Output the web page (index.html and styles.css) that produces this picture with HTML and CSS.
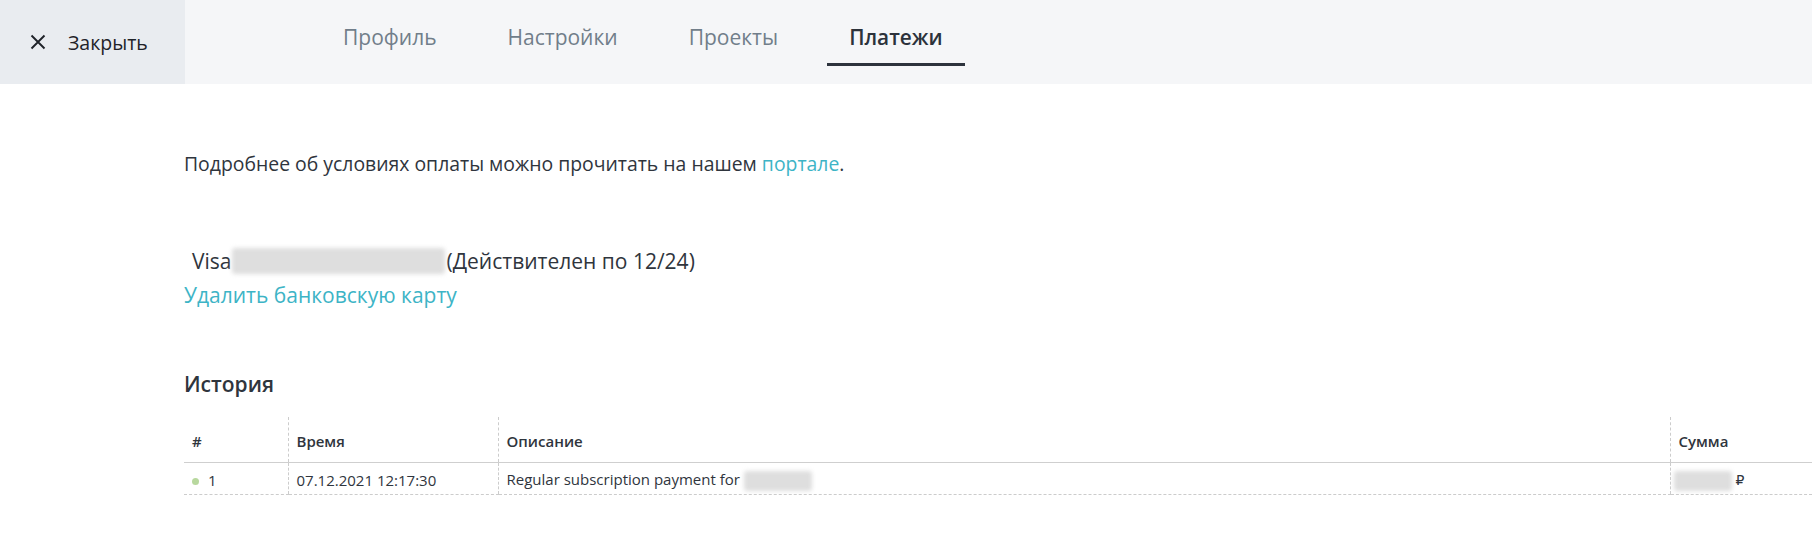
FILE: index.html
```html
<!DOCTYPE html>
<html lang="ru">
<head>
<meta charset="utf-8">
<title>Платежи</title>
<link rel="stylesheet" href="styles.css">
</head>
<body>
<header class="topbar">
  <a class="close" href="#">
    <svg class="close-icon" width="16" height="16" viewBox="0 0 16 16"><path d="M1.5 1.5 L14.5 14.5 M14.5 1.5 L1.5 14.5" stroke="#1f2329" stroke-width="1.9" fill="none"/></svg>
    <span>Закрыть</span>
  </a>
  <nav class="tabs">
    <a class="tab" href="#">Профиль</a>
    <a class="tab" href="#">Настройки</a>
    <a class="tab" href="#">Проекты</a>
    <a class="tab active" href="#">Платежи</a>
  </nav>
</header>
<main class="content">
  <p class="intro">Подробнее об условиях оплаты можно прочитать на нашем <a class="link" href="#">портале</a>.</p>
  <div class="card-line"><span>Visa</span><span class="blur blur-card"></span><span>(Действителен по 12/24)</span></div>
  <a class="link delete" href="#">Удалить банковскую карту</a>
  <h2 class="history-title">История</h2>
  <table class="history">
    <colgroup>
      <col class="c-num"><col class="c-time"><col class="c-desc"><col class="c-sum">
    </colgroup>
    <thead>
      <tr><th>#</th><th>Время</th><th>Описание</th><th>Сумма</th></tr>
    </thead>
    <tbody>
      <tr>
        <td><span class="dot"></span>1</td>
        <td>07.12.2021 12:17:30</td>
        <td>Regular subscription payment for <span class="blur blur-desc"></span></td>
        <td><span class="blur blur-sum"></span><span class="rub">₽</span></td>
      </tr>
    </tbody>
  </table>
</main>
</body>
</html>
```
FILE: styles.css
```css
* { box-sizing: border-box; }
html, body { margin: 0; padding: 0; background: #fff; }
body {
  font-family: "Open Sans", "Noto Sans", sans-serif;
  color: #2f353d;
  overflow: hidden;
}
a { text-decoration: none; }

.topbar {
  display: flex;
  height: 84px;
  background: #f5f6f8;
}
.close {
  width: 185px;
  display: flex;
  align-items: center;
  gap: 22px;
  padding-left: 30px;
  background: #e9ecf0;
  color: #1f2329;
  font-size: 19.5px;
}
.close-icon { display: block; }

.tabs {
  display: flex;
  gap: 27px;
  margin-left: 136px;
}
.tab {
  display: flex;
  align-items: center;
  height: 66px;
  padding: 11px 22px 0;
  border-bottom: 3px solid transparent;
  font-size: 21px;
  color: #717e8a;
}
.tab.active {
  color: #2c323b;
  font-weight: 600;
  font-size: 20.8px;
  border-bottom-color: #2d333d;
}

.content {
  padding: 65px 0 0 184px;
}
.intro {
  margin: 0;
  font-size: 19.4px;
  line-height: 30px;
}
.link { color: #3db4c6; }
.card-line {
  margin-top: 67px;
  padding-left: 8px;
  font-size: 21px;
  line-height: 30px;
  display: flex;
  align-items: center;
}
.blur {
  display: inline-block;
  background: #dedede;
  filter: blur(2px);
  border-radius: 3px;
}
.blur-card { width: 213px; height: 26px; margin: 0 2px 0 0; }
.delete {
  display: block;
  margin-top: 4px;
  font-size: 21px;
  line-height: 30px;
}
.history-title {
  margin: 58px 0 0;
  font-size: 21px;
  line-height: 32px;
  font-weight: 600;
  color: #2f353d;
}
.history {
  margin-top: 17px;
  width: 100%;
  border-collapse: collapse;
  font-size: 15px;
  line-height: 20px;
  color: #2f353d;
}
.c-num { width: 104px; }
.c-time { width: 210px; }
.c-desc { width: 1172px; }
.history th {
  text-align: left;
  font-weight: 600;
  vertical-align: bottom;
  padding: 14px 8px 11px;
  border-bottom: 1px solid #cfcfcf;
}
.history td {
  padding: 6px 8px 3px;
  border-bottom: 1px dashed #cccccc;
  white-space: nowrap;
}
.history th + th, .history td + td {
  border-left: 1px dashed #cccccc;
}
.dot {
  display: inline-block;
  width: 7px;
  height: 7px;
  border-radius: 50%;
  background: #b8d89e;
  margin: 0 9px 1px 0;
  vertical-align: middle;
}
.blur-desc { width: 68px; height: 20px; vertical-align: middle; margin-left: 0; }
.blur-sum { width: 58px; height: 20px; vertical-align: middle; margin: 0 4px 0 -5px; }
.rub { font-family: "DejaVu Sans", sans-serif; font-weight: 400; font-size: 14px; }
```
